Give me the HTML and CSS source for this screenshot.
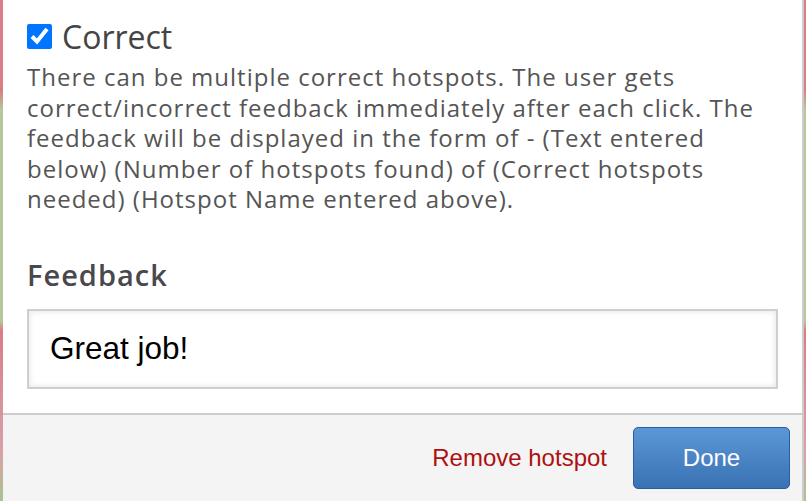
FILE: index.html
```html
<!DOCTYPE html>
<html lang="en">
<head>
  <meta charset="UTF-8" />
  <title>Hotspot settings</title>
  <link rel="stylesheet" href="styles.css">
</head>
<body>

  <div class="dialog">
    <div class="content">
      <label class="check-row">
        <input type="checkbox" checked />
        <span>Correct</span>
      </label>
      <p class="help">There can be multiple correct hotspots. The user gets correct/incorrect feedback immediately after each click. The feedback will be displayed in the form of - (Text entered below) (Number of hotspots found) of (Correct hotspots needed) (Hotspot Name entered above).</p>

      <h3 class="field-label">Feedback</h3>
      <input class="text-input" type="text" value="Great job!" />
    </div>

    <!-- Footer -->
    <div class="footer">
      <a class="remove-link" href="#">Remove hotspot</a>
      <button class="done-btn">Done</button>
    </div>
  </div>

</body>
</html>
```

FILE: styles.css
```css
* { box-sizing: border-box; }

body {
  margin: 0;
  height: 501px;
  overflow: hidden;
  background: linear-gradient(to bottom, #d97d86 0%, #d97d86 18%, #b6c79a 22%, #b6c79a 64%, #d97d86 66%, #d9a0a8 90%, #a8c490 100%);
  font-family: 'Open Sans', sans-serif;
}

.dialog {
  margin-left: 3px;
  width: 801px;
  height: 501px;
  background: white;
  border-right: 2px solid #cccccc;
  display: flex;
  flex-direction: column;
}

.content {
  flex: 1;
  padding: 14px 24px 0 24px;
}

.check-row {
  display: flex;
  align-items: center;
  gap: 10px;
  font-size: 32px;
  color: #444;
  height: 44px;
}

.check-row input {
  width: 25px;
  height: 25px;
  margin: 0;
  accent-color: #0075ff;
}

.help {
  margin: 4px 0 0 0;
  font-size: 24px;
  line-height: 30.5px;
  letter-spacing: 1px;
  color: #555;
  padding-right: 20px;
}

.field-label {
  margin: 42px 0 16px 0;
  font-size: 29px;
  font-weight: 600;
  letter-spacing: 1px;
  color: #48484d;
  line-height: 36px;
}

.text-input {
  width: 751px;
  height: 80px;
  border: 2px solid #cfcfcf;
  box-shadow: inset 0 0 6px rgba(0,0,0,0.12);
  padding: 0 21px;
  font-family: 'Liberation Sans', Arial, sans-serif;
  font-size: 31.5px;
  color: #000;
  outline: none;
}

.footer {
  height: 88px;
  border-top: 2px solid #cccccc;
  background: #f4f4f4;
  display: flex;
  align-items: center;
  justify-content: flex-end;
  padding-right: 12px;
  gap: 26px;
}

.remove-link {
  font-family: 'Liberation Sans', Arial, sans-serif;
  font-size: 24px;
  color: #ad1010;
  text-decoration: none;
}

.done-btn {
  width: 157px;
  height: 62px;
  border: 1px solid #285f9c;
  border-radius: 5px;
  background: linear-gradient(to bottom, #5b97d6, #3a72b4);
  color: white;
  font-family: 'Liberation Sans', Arial, sans-serif;
  font-size: 24px;
  cursor: pointer;
}
```
